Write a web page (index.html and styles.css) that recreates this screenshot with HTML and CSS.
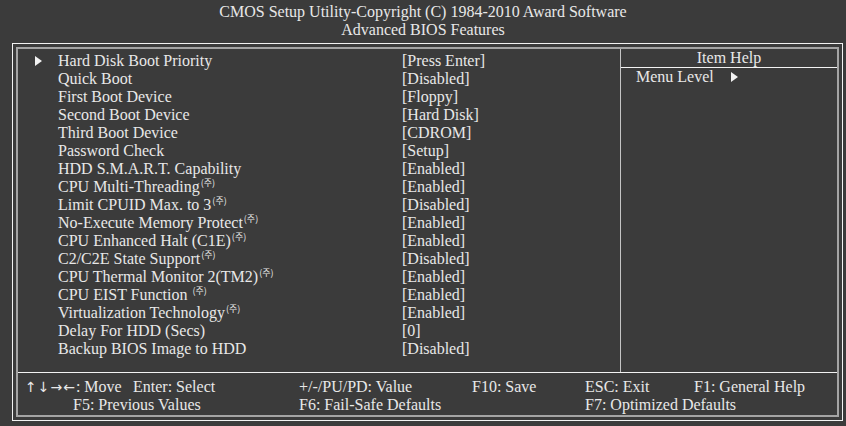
FILE: index.html
```html
<!DOCTYPE html>
<html>
<head>
    <title>Advanced BIOS Features</title>
    <link rel="stylesheet" href="styles.css">
</head>
<body>
    <div class="title">
        <div>CMOS Setup Utility-Copyright (C) 1984-2010 Award Software</div>
        <div>Advanced BIOS Features</div>
    </div>

    <div class="frame">
        <div class="inner">
            <div class="main">
                <div class="items">
                    <div class="row"><span class="mark"><i class="tri"></i></span><span>Hard Disk Boot Priority</span><span>[Press Enter]</span></div>
                    <div class="row"><span class="mark"></span><span>Quick Boot</span><span>[Disabled]</span></div>
                    <div class="row"><span class="mark"></span><span>First Boot Device</span><span>[Floppy]</span></div>
                    <div class="row"><span class="mark"></span><span>Second Boot Device</span><span>[Hard Disk]</span></div>
                    <div class="row"><span class="mark"></span><span>Third Boot Device</span><span>[CDROM]</span></div>
                    <div class="row"><span class="mark"></span><span>Password Check</span><span>[Setup]</span></div>
                    <div class="row"><span class="mark"></span><span>HDD S.M.A.R.T. Capability</span><span>[Enabled]</span></div>
                    <div class="row"><span class="mark"></span><span>CPU Multi-Threading<sup class="note">(주)</sup></span><span>[Enabled]</span></div>
                    <div class="row"><span class="mark"></span><span>Limit CPUID Max. to 3<sup class="note">(주)</sup></span><span>[Disabled]</span></div>
                    <div class="row"><span class="mark"></span><span>No-Execute Memory Protect<sup class="note">(주)</sup></span><span>[Enabled]</span></div>
                    <div class="row"><span class="mark"></span><span>CPU Enhanced Halt (C1E)<sup class="note">(주)</sup></span><span>[Enabled]</span></div>
                    <div class="row"><span class="mark"></span><span>C2/C2E State Support<sup class="note">(주)</sup></span><span>[Disabled]</span></div>
                    <div class="row"><span class="mark"></span><span>CPU Thermal Monitor 2(TM2)<sup class="note">(주)</sup></span><span>[Enabled]</span></div>
                    <div class="row"><span class="mark"></span><span>CPU EIST Function <sup class="note">(주)</sup></span><span>[Enabled]</span></div>
                    <div class="row"><span class="mark"></span><span>Virtualization Technology<sup class="note">(주)</sup></span><span>[Enabled]</span></div>
                    <div class="row"><span class="mark"></span><span>Delay For HDD (Secs)</span><span>[0]</span></div>
                    <div class="row"><span class="mark"></span><span>Backup BIOS Image to HDD</span><span>[Disabled]</span></div>
                </div>
                <div class="help">
                    <div class="help-head">Item Help</div>
                    <div class="help-body">Menu Level <i class="tri"></i></div>
                </div>
            </div>
            <div class="keys">
                <span class="c1"><span class="arrows">↑↓→←</span>: Move</span>
                <span class="c2">Enter: Select</span>
                <span class="c3">+/-/PU/PD: Value</span>
                <span class="c4">F10: Save</span>
                <span class="c5">ESC: Exit</span>
                <span class="c6">F1: General Help</span>
                <span class="c12">F5: Previous Values</span>
                <span class="c34">F6: Fail-Safe Defaults</span>
                <span class="c56">F7: Optimized Defaults</span>
            </div>
        </div>
    </div>
</body>
</html>
```

FILE: styles.css
```css
:root {
    --bg: #3b3b3b;
    --text: #e8e8e8;
    --white: #f2f2f2;
    --grey: #a4a4a4;
    --divider: #c4c4c4;
}

body {
    background-color: var(--bg);
    color: var(--text);
    font-family: "Liberation Serif", "Times New Roman", serif;
    font-size: 16px;
    line-height: 18px;
    margin: 0;
    width: 846px;
    height: 426px;
    overflow: hidden;
}

.title {
    text-align: center;
    padding-top: 3px;
    height: 40px;
}

.frame {
    margin: 0 3px 0 12px;
    border: 1px solid var(--white);
    padding: 3px;
}

.inner {
    border: 2px solid var(--grey);
}

.main {
    display: flex;
    height: 323px;
    border-bottom: 1px solid var(--white);
}

.items {
    width: 602px;
    padding-top: 3px;
    border-right: 1px solid var(--divider);
}

.row {
    display: grid;
    grid-template-columns: 40px 344px 1fr;
    height: 18px;
}

.mark {
    padding-left: 17px;
    display: flex;
    align-items: center;
}

.tri {
    display: inline-block;
    width: 0;
    height: 0;
    border-left: 7px solid var(--white);
    border-top: 5px solid transparent;
    border-bottom: 5px solid transparent;
}

.note {
    font-family: "Noto Sans CJK KR", sans-serif;
    font-size: 9px;
    line-height: 9px;
    vertical-align: 6px;
    margin-left: 1px;
}

.help {
    flex: 1;
}

.help-head {
    text-align: center;
    height: 18px;
    border-bottom: 1px solid var(--white);
}

.help-body {
    padding-left: 15px;
    display: flex;
    align-items: center;
    gap: 17px;
}

.keys {
    display: grid;
    grid-template-columns: 108px 166px 173px 113px 109px 1fr;
    padding: 5px 0 1px 7px;
    height: 36px;
    white-space: nowrap;
}

.arrows {
    font-family: "DejaVu Sans", sans-serif;
    font-size: 14px;
    letter-spacing: 1px;
}

.c12 {
    grid-column: 1 / 3;
    padding-left: 48px;
}

.c34 {
    grid-column: 3 / 5;
}

.c56 {
    grid-column: 5 / 7;
}
```
